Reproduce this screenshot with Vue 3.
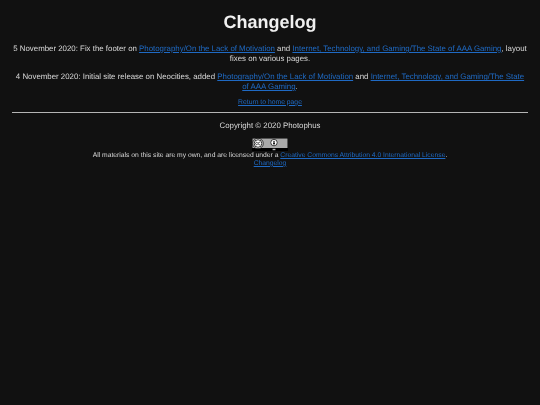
<script setup>
const entries = [
  {
    date: "5 November 2020: Fix the footer on ",
    first: "Photography/On the Lack of Motivation",
    second: "Internet, Technology, and Gaming/The State of AAA Gaming",
    tail: ", layout fixes on various pages.",
  },
  {
    date: "4 November 2020: Initial site release on Neocities, added ",
    first: "Photography/On the Lack of Motivation",
    second: "Internet, Technology, and Gaming/The State of AAA Gaming",
    tail: ".",
  },
];
</script>

<template>
  <div class="page">
    <h1 class="title">Changelog</h1>
    <p v-for="entry in entries" :key="entry.date" class="entry">
      {{ entry.date }}<a href="#">{{ entry.first }}</a> and <a href="#">{{ entry.second }}</a>{{ entry.tail }}
    </p>
    <p class="back"><a href="#">Return to home page</a></p>
    <hr class="rule" />
    <footer class="footer">
      <p class="copyright">Copyright © 2020 Photophus</p>
      <svg class="badge" width="36" height="13" viewBox="0 0 36 13">
        <rect x="0" y="0" width="36" height="13" fill="#000" />
        <rect x="0.5" y="0.5" width="35" height="9.5" fill="#aaa" />
        <circle cx="6" cy="5.5" r="5.2" fill="#fff" stroke="#000" stroke-width="0.8" />
        <circle cx="6" cy="5.5" r="3.8" fill="#fff" stroke="#000" stroke-width="0.8" />
        <path d="M5.6 4.6a1.2 1.2 0 1 0 0 1.8M8.2 4.6a1.2 1.2 0 1 0 0 1.8" fill="none" stroke="#000" stroke-width="0.7" />
        <circle cx="22" cy="4.6" r="3.2" fill="#fff" stroke="#000" stroke-width="0.7" />
        <circle cx="22" cy="3.4" r="0.7" fill="#000" />
        <rect x="21.1" y="4.4" width="1.8" height="2" fill="#000" />
        <rect x="20.6" y="10.8" width="2.8" height="1.4" fill="#bbb" />
      </svg>
      <p class="license">All materials on this site are my own, and are licensed under a <a href="#">Creative Commons Attribution 4.0 International License</a>.</p>
      <p class="license"><a href="#">Changelog</a></p>
    </footer>
  </div>
</template>

<style scoped>
.page {
  padding: 0 12px;
  text-align: center;
  color: #d8d8d8;
  font-family: "Liberation Sans", Arial, sans-serif;
  text-rendering: geometricPrecision;
  will-change: transform;
}

.title {
  margin: 0;
  padding-top: 12px;
  font-size: 18px;
  line-height: 21px;
  color: #f0f0f0;
}

.entry {
  margin: 11px 0 0;
  font-size: 7.87px;
  line-height: 9.7px;
}

.entry + .entry {
  margin-top: 9px;
}

.back {
  margin: 6px 0 0;
  font-size: 6.8px;
  line-height: 9px;
}

a {
  color: #1f6ac4;
}

.rule {
  margin: 5px 0 0;
  border: 0;
  height: 1px;
  background: #b5b5b5;
}

.footer {
  padding-top: 8px;
}

.copyright {
  margin: 0;
  font-size: 7.87px;
  line-height: 10px;
}

.badge {
  display: block;
  margin: 7px auto 0;
}

.license {
  margin: 0;
  font-size: 6.76px;
  line-height: 8px;
}

.badge + .license {
  margin-top: 1px;
}
</style>

<style>
body {
  background: #111;
}
</style>
